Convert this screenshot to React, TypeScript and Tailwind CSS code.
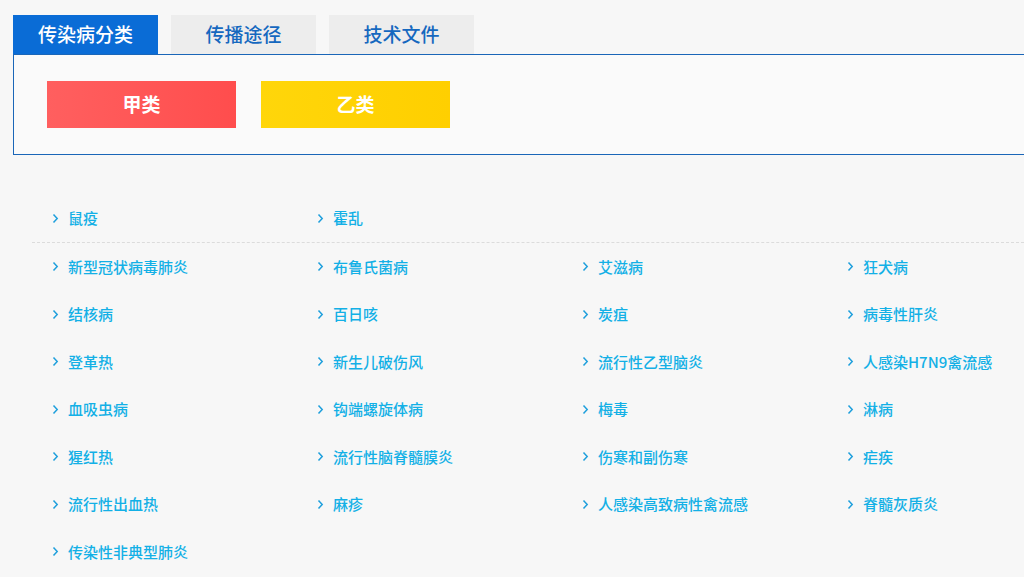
const tabs = ['传染病分类', '传播途径', '技术文件'];

const firstRow = ['鼠疫', '霍乱'];

const items = [
  '新型冠状病毒肺炎', '布鲁氏菌病', '艾滋病', '狂犬病',
  '结核病', '百日咳', '炭疽', '病毒性肝炎',
  '登革热', '新生儿破伤风', '流行性乙型脑炎', '人感染H7N9禽流感',
  '血吸虫病', '钩端螺旋体病', '梅毒', '淋病',
  '猩红热', '流行性脑脊髓膜炎', '伤寒和副伤寒', '疟疾',
  '流行性出血热', '麻疹', '人感染高致病性禽流感', '脊髓灰质炎',
  '传染性非典型肺炎',
];

function Chevron() {
  return (
    <svg width="7" height="11" viewBox="0 0 7 11" className="shrink-0">
      <polyline points="1.5,1.5 5.2,5.5 1.5,9.5" fill="none" stroke="#1e9fdc" strokeWidth="1.5" />
    </svg>
  );
}

function Item({ label, first }: { label: string; first?: boolean }) {
  return (
    <a
      href="#"
      className={`flex items-center gap-[9px] text-[15px] font-medium text-[#13b0e6] ${
        first ? 'h-12' : 'h-[47.5px]'
      }`}
    >
      <Chevron />
      <span>{label}</span>
    </a>
  );
}

export default function App() {
  return (
    <div
      className="min-h-[577px] w-[1024px] overflow-hidden bg-[#f7f7f7] pt-[15px] pl-[13px]"
      style={{ fontFamily: '"Noto Sans CJK SC", "Noto Sans", sans-serif' }}
    >
      <div className="flex gap-[13px]">
        {tabs.map((t, i) => (
          <div
            key={t}
            className={`w-[145px] h-[39px] flex items-center justify-center text-[19px] font-medium ${
              i === 0 ? 'bg-[#0a6cd6] text-white' : 'bg-[#ededed] text-[#1568bf]'
            }`}
          >
            {t}
          </div>
        ))}
      </div>

      <div className="h-[101px] border border-r-0 border-[#1a66b8] bg-[#fafafa] pt-[26px] pl-[33px] flex gap-[25px]">
        <div className="w-[189px] h-[47px] flex items-center justify-center text-[19px] font-bold text-white bg-gradient-to-r from-[#ff5f5f] to-[#ff4d4d]">
          甲类
        </div>
        <div className="w-[189px] h-[47px] flex items-center justify-center text-[19px] font-bold text-white bg-gradient-to-r from-[#ffd60a] to-[#ffcf00]">
          乙类
        </div>
      </div>

      <div className="mt-[39px] ml-[19px]">
        <div className="grid grid-cols-[265px_265px_265px_265px] pl-[20px] border-b border-dashed border-[#dcdcdc]">
          {firstRow.map((l) => (
            <Item key={l} label={l} first />
          ))}
        </div>
        <div className="grid grid-cols-[265px_265px_265px_265px] pl-[20px]">
          {items.map((l) => (
            <Item key={l} label={l} />
          ))}
        </div>
      </div>
    </div>
  );
}
